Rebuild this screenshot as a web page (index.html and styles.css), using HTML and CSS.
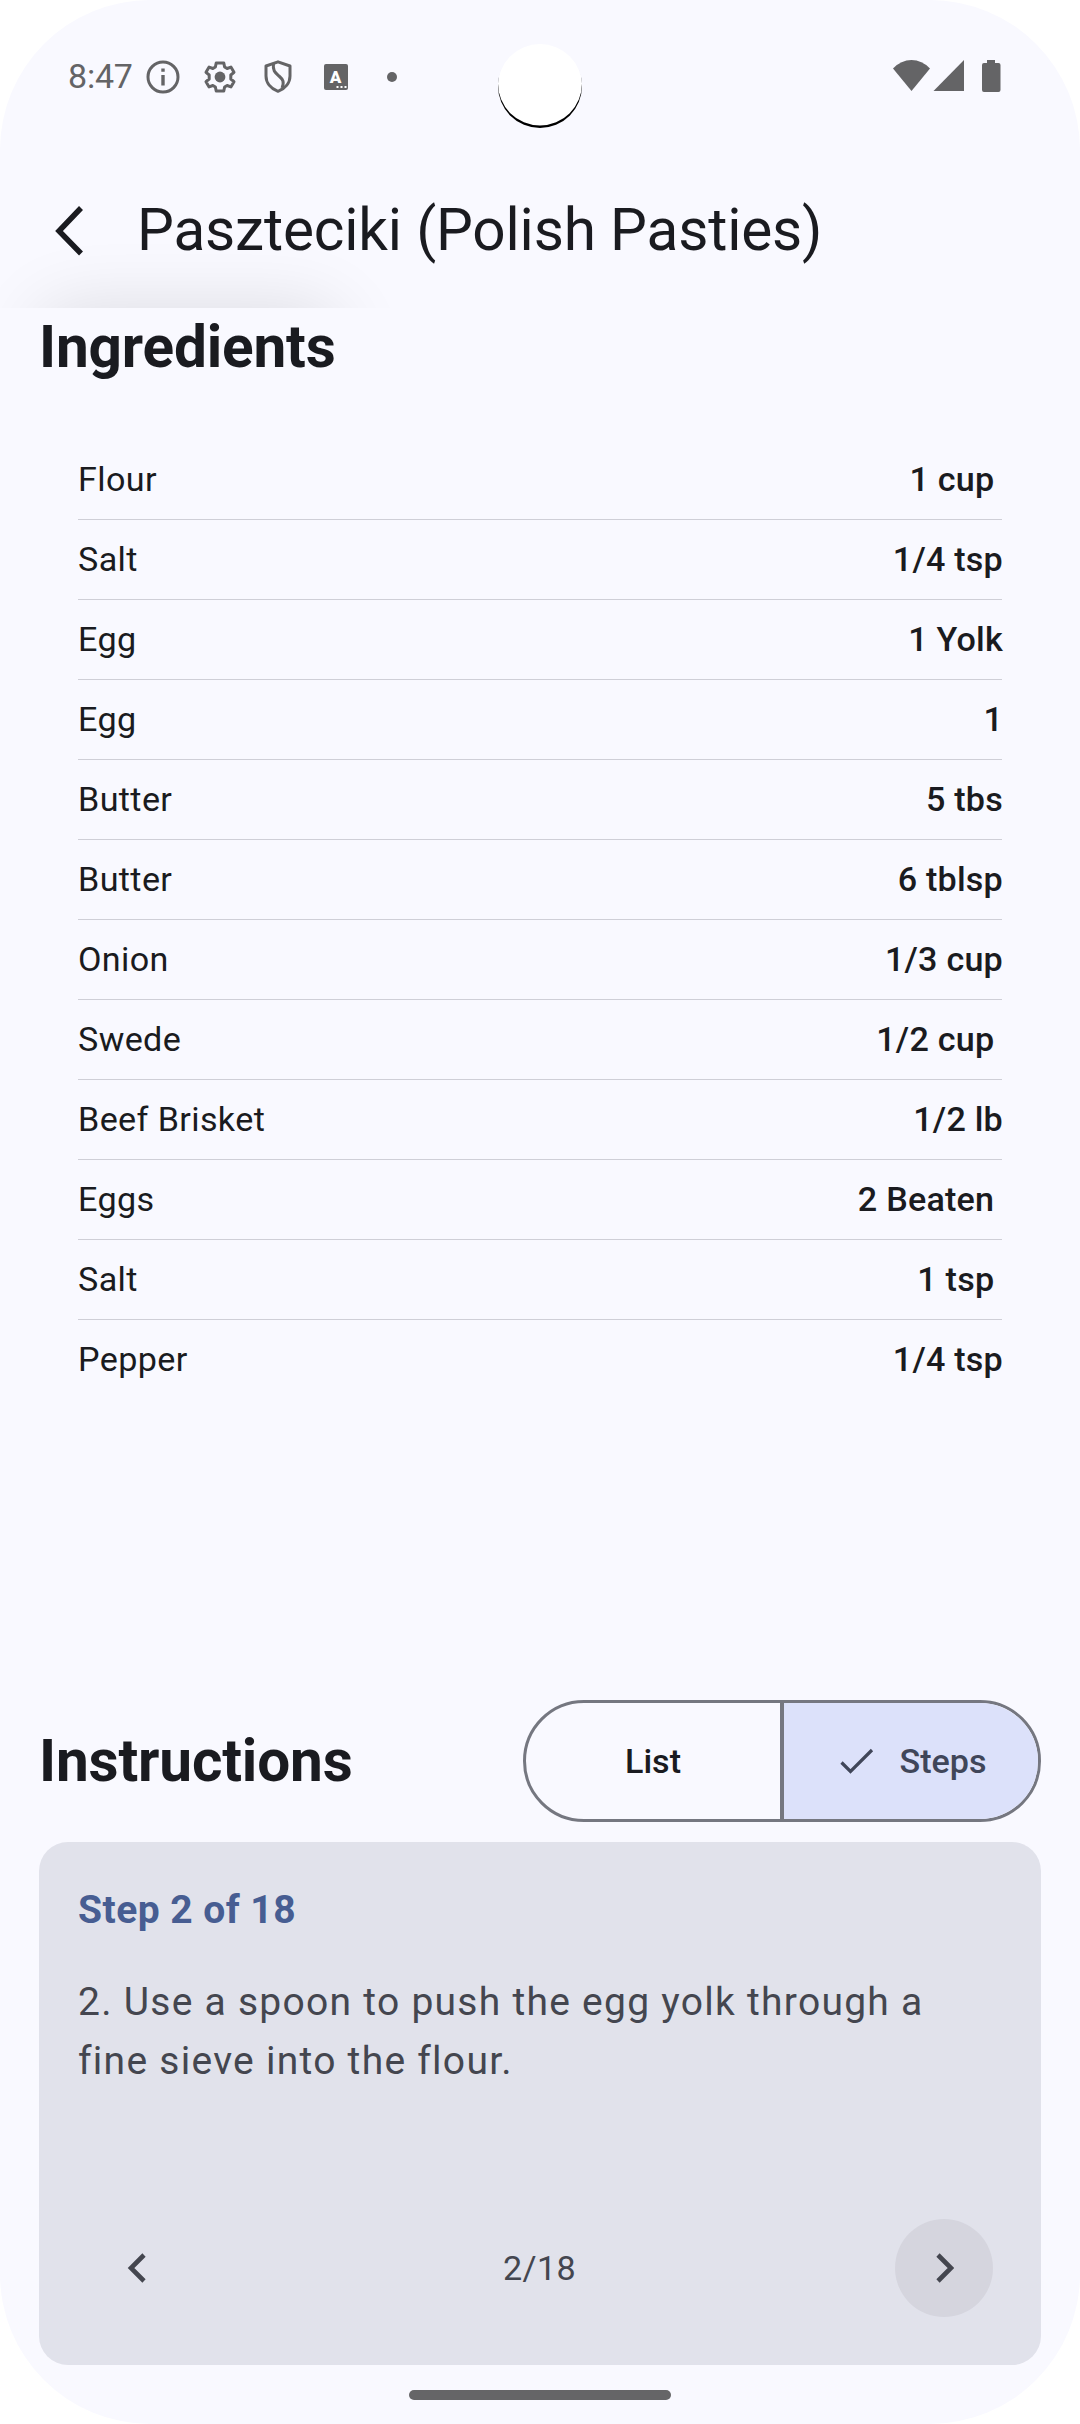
FILE: index.html
```html
<!DOCTYPE html>
<html lang="en">
<head>
<meta charset="utf-8">
<title>Paszteciki (Polish Pasties)</title>
<link rel="stylesheet" href="styles.css">
</head>
<body>
<div class="screen">
  <header class="status">
    <span class="clock">8:47</span>
    <svg class="ic-info" viewBox="0 0 34 34" width="34" height="34"><circle cx="17" cy="17" r="15" fill="none" stroke="#646466" stroke-width="3"/><path d="M15.300 8.500h3.400v3.200h-3.400zM15.300 15h3.400v10.500h-3.400z" fill="#646466"/></svg>
    <svg class="ic-gear" viewBox="0 0 32 32" width="32" height="32"><path d="M12.200 2h7.600l.8 4 2.500 1.500 3.800-1.400 3.100 5.200-3.200 2.700v4l3.200 2.700-3.100 5.200-3.800-1.400-2.500 1.500-.8 4h-7.600l-.8-4-2.500-1.500-3.800 1.400L2 20.700 5.200 18v-4L2 11.300l3.100-5.200 3.800 1.400L11.400 6z" fill="none" stroke="#646466" stroke-width="3" stroke-linejoin="round"/><circle cx="16" cy="16" r="5.400" fill="#646466"/></svg>
    <svg class="ic-shield" viewBox="0 0 28 33" width="28" height="33"><path d="M14 1.800L26 6v10c0 6.500-4.500 12.500-12 15.300C6.500 28.500 2 22.500 2 16V6z" fill="none" stroke="#646466" stroke-width="3" stroke-linejoin="round"/><path d="M9.500 3.500c-1 7 1.500 9 5.500 12.500s5.500 6 3 12" fill="none" stroke="#646466" stroke-width="3"/></svg>
    <svg class="ic-a" viewBox="0 0 24 26" width="24" height="26"><rect width="24" height="26" rx="2" fill="#646466"/><text class="ic-letter" x="11.500" y="19" text-anchor="middle">A</text><path d="M12.500 22h2v2h-2zM16.500 22h2v2h-2zM20.500 22h2v2h-2z" fill="#fff"/></svg>
    <span class="dot"></span>
    <svg class="signals" viewBox="0 0 110 34" width="110" height="34" fill="#646466"><path d="M0 8.500Q8 0 18.500 0T37 8.500L18.500 31z"/><path d="M71 0v31H40.500z"/><path d="M94 0h8v3h3.500q2 0 2 2v25q0 2-2 2H91q-2 0-2-2V5q0-2 2-2h3z"/></svg>
    <span class="camera"></span>
  </header>

  <div class="appbar">
    <svg width="30" height="52" viewBox="0 0 30 52"><path d="M26 3L4 26l22 22.500" fill="none" stroke="#1a1b20" stroke-width="5.500"/></svg>
    <h1>Paszteciki (Polish Pasties)</h1>
  </div>

  <main>
    <h2>Ingredients</h2>
    <ul class="ingredients">
      <li><span>Flour</span><b>1 cup </b></li>
      <li><span>Salt</span><b>1/4 tsp</b></li>
      <li><span>Egg</span><b>1 Yolk</b></li>
      <li><span>Egg</span><b>1</b></li>
      <li><span>Butter</span><b>5 tbs</b></li>
      <li><span>Butter</span><b>6 tblsp</b></li>
      <li><span>Onion</span><b>1/3 cup</b></li>
      <li><span>Swede</span><b>1/2 cup </b></li>
      <li><span>Beef Brisket</span><b>1/2 lb</b></li>
      <li><span>Eggs</span><b>2 Beaten </b></li>
      <li><span>Salt</span><b>1 tsp </b></li>
      <li><span>Pepper</span><b>1/4 tsp</b></li>
    </ul>

    <div class="instructions-head">
      <h2>Instructions</h2>
      <div class="segmented">
        <button class="seg">List</button>
        <button class="seg selected"><svg width="34" height="27" viewBox="0 0 34 27"><path d="M1.500 14.500l9 9L32 2" fill="none" stroke="#404659" stroke-width="3.200"/></svg>Steps</button>
      </div>
    </div>

    <section class="card">
      <h3>Step 2 of 18</h3>
      <p>2. Use a spoon to push the egg yolk through a fine sieve into the flour.</p>
      <nav>
        <button class="round"><svg width="20" height="30" viewBox="0 0 20 30"><path d="M18 2L5 15l13 13" fill="none" stroke="#44464f" stroke-width="4.600"/></svg></button>
        <span>2/18</span>
        <button class="round active"><svg width="20" height="30" viewBox="0 0 20 30"><path d="M4 2l13 13L4 28" fill="none" stroke="#44464f" stroke-width="4.600"/></svg></button>
      </nav>
    </section>
  </main>
  <div class="home"></div>
</div>
</body>
</html>
```
FILE: styles.css
```css
* { box-sizing: border-box; }
body { margin: 0; background: #fff; font-family: Roboto, sans-serif; color: #1a1b20; }
h1, h2, h3, p, ul { margin: 0; padding: 0; }
button { border: 0; padding: 0; background: none; font: inherit; color: inherit; }
svg { display: block; flex: none; }

.screen { width: 1080px; height: 2424px; border-radius: 150px; background: #f9f9ff; overflow: hidden; display: flex; flex-direction: column; }

.status { position: relative; height: 153px; padding: 0 77px 0 68px; display: flex; align-items: center; color: #646466; }
.clock { font-size: 34px; width: 78px; letter-spacing: -.2px; padding-bottom: 2px; }
.ic-gear { margin-left: 24px; }
.ic-shield { margin-left: 28px; }
.ic-a { margin-left: 32px; }
.ic-letter { font-size: 17px; font-weight: 900; fill: #fff; }
.dot { width: 10px; height: 10px; border-radius: 50%; background: #646466; margin-left: 39px; }
.signals { margin-left: auto; }
.camera { position: absolute; left: 498px; top: 44px; width: 84px; height: 84px; border-radius: 50%; background: #fff; box-shadow: inset 0 -2.5px 0 #000; }

.appbar { position: relative; overflow: hidden; height: 155px; padding-left: 55px; display: flex; align-items: center; }
.appbar::after { content: ""; position: absolute; left: 39px; top: 155px; width: 300px; height: 120px; border-radius: 30px; box-shadow: 0 0 72px rgba(0, 0, 0, .12); }
.appbar h1 { font-size: 58.5px; font-weight: 400; line-height: 78px; margin-left: 52px; letter-spacing: -.17px; padding-bottom: 1px; }

main { flex: 1; padding: 0 39px; }
h2 { font-size: 58.5px; font-weight: 700; line-height: 78px; letter-spacing: -.17px; }
.ingredients { list-style: none; margin: 54px 39px 0; font-size: 34.125px; letter-spacing: .38px; }
.ingredients li { height: 80px; padding-bottom: 2px; display: flex; justify-content: space-between; align-items: center; border-bottom: 1px solid #cfcfd7; white-space: pre; }
.ingredients li:last-child { border-bottom-color: transparent; }
.ingredients b { font-weight: 500; letter-spacing: .22px; margin-right: -1px; }

.instructions-head { display: flex; justify-content: space-between; align-items: center; margin-top: 300px; height: 122px; }
.segmented { width: 518px; height: 122px; border: 3px solid #757780; border-radius: 61px; overflow: hidden; display: grid; grid-template-columns: 254px 258px; font-size: 34.125px; font-weight: 500; letter-spacing: .24px; }
.seg { display: flex; align-items: center; justify-content: center; gap: 25px; }
.seg.selected { background: #dce1fa; color: #404659; border-left: 4px solid #757780; padding: 0 0 0 5px; }

.card { margin-top: 20px; height: 523px; border-radius: 29px; background: #e1e2eb; padding: 39px; display: flex; flex-direction: column; color: #44464f; }
.card h3 { font-size: 39px; line-height: 58.5px; font-weight: 700; color: #475d92; letter-spacing: .47px; }
.card p { font-size: 39px; line-height: 59px; letter-spacing: 1.27px; margin-top: 33px; }
.card nav { margin-top: auto; padding: 0 9px 9px; display: flex; align-items: center; justify-content: space-between; font-size: 34.125px; letter-spacing: .3px; }
.card nav span { padding: 0 1px 1px 0; }
.round { width: 98px; height: 98px; border-radius: 50%; display: flex; align-items: center; justify-content: center; }
.round.active { background: #d5d5de; }

.home { width: 262px; height: 10px; border-radius: 5px; background: #656567; margin: 0 auto 24px; }
```
